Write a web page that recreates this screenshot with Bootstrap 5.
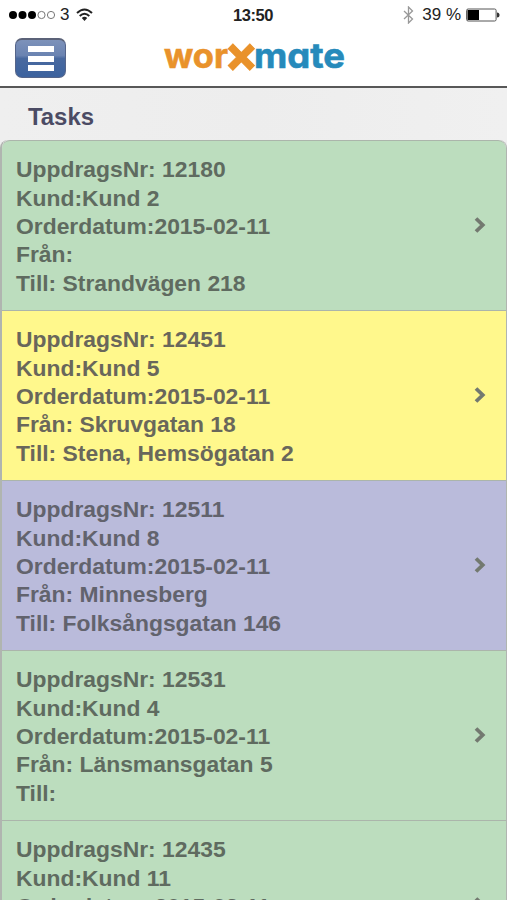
<!DOCTYPE html>
<html lang="sv">
<head>
<meta charset="utf-8">
<meta name="viewport" content="width=device-width, initial-scale=1">
<title>worXmate – Tasks</title>
<link href="https://cdn.jsdelivr.net/npm/bootstrap@5.3.0/dist/css/bootstrap.min.css" rel="stylesheet">
<style>
body{font-family:"Liberation Sans",Arial,sans-serif;height:900px;overflow:hidden;background:#efefef;color:#222}
svg{display:block;flex:none}
.status-bar{height:30px;font-size:17px;line-height:30px;padding:0 7px 0 9px;display:grid;grid-template-columns:1fr auto 1fr}
.status-bar .clock{font-size:16.5px;letter-spacing:-.4px;margin-left:-3px}
.app-header{height:58px;border-bottom:2px solid #585858;padding:0 15px;display:grid;grid-template-columns:51px 1fr 51px}
.menu-btn,.menu-btn:hover{width:51px;height:40px;margin-top:8px;border:1px solid #55658a;border-top:2px solid #5b6278;border-radius:7px;background:linear-gradient(#7d92ba,#6a83b1 42%,#49699f 50%,#3c639f);gap:3.5px}
.menu-btn span{width:26px;height:6px;background:#fff}
.logo{margin:4px 0 0}
.page-title{height:52px;padding:0 0 0 28px;font-size:23.9px;font-weight:700;line-height:57px;color:#4b4b64;background:linear-gradient(90deg,#efefef,#ededed 50%,#f0f0f0)}
.task-list{--bs-list-group-border-radius:8px;height:760px;overflow:hidden;border:solid #b0b5b0;border-width:0 1px 0 2px;border-radius:8px 8px 0 0}
.task-list .task{height:170px;flex:none;padding:14.4px 20px 0 14px;border:0;border-top:1px solid #abb5ab;font-size:22.87px;font-weight:700;line-height:28.3px}
.task svg{margin-top:61px}
.task-green{background:#bcddbe;color:#5f6b60}
.task-yellow{background:#fff88c;color:#69675b}
.task-blue{background:#babbdb;color:#62636d}
</style>
<script src="https://cdn.jsdelivr.net/npm/bootstrap@5.3.0/dist/js/bootstrap.bundle.min.js" defer></script>
</head>
<body>
<svg width="0" height="0" class="position-absolute"><symbol id="chev" viewBox="0 0 12 18"><path d="M2 2.500 L8.700 9 L2 15.500" fill="none" stroke="#737970" stroke-width="3.800"/></symbol></svg>
<div class="status-bar bg-white">
  <div class="d-flex align-items-center">
    <svg width="48" height="12" viewBox="0 0 48 12"><g fill="#000"><circle cx="4" cy="6" r="4"/><circle cx="13.500" cy="6" r="4"/><circle cx="23" cy="6" r="4"/></g><g fill="none" stroke="#777"><circle cx="32.500" cy="6" r="3.600"/><circle cx="42" cy="6" r="3.600"/></g></svg>
    <span style="margin-left:3px">3</span>
    <svg style="margin-left:7px" width="17" height="14" viewBox="0 0 17 14"><g fill="none" stroke="#222" stroke-width="2"><path d="M1 5 Q8.500 -2 16 5"/><path d="M3.700 8 Q8.500 3.500 13.300 8"/></g><path d="M5.800 10 Q8.500 7.700 11.200 10 L8.500 13Z" fill="#222"/></svg>
  </div>
  <div class="clock fw-bold">13:50</div>
  <div class="d-flex align-items-center justify-content-end">
    <svg width="11" height="18" viewBox="0 0 11 18"><path d="M1 5 L9.500 13 L5.500 17 V1 L9.500 5 L1 13" fill="none" stroke="#999" stroke-width="1.300"/></svg>
    <span style="margin:0 5px 0 8px">39 %</span>
    <svg width="34" height="14" viewBox="0 0 34 14"><rect x=".6" y="1" width="29.500" height="12" rx="1.500" fill="#fff" stroke="#555"/><path d="M1.500 2H13V12H1.500Z" fill="#000"/><path d="M31 4.500Q33.500 4.500 33.500 7T31 9.500Z" fill="#333"/></svg>
  </div>
</div>
<header class="app-header bg-white">
  <button class="menu-btn btn p-0 d-flex flex-column align-items-center justify-content-center" aria-label="Menu"><span></span><span></span><span></span></button>
  <svg class="logo mx-auto" width="190" height="50" viewBox="-3 0 190 50" font-family="Inter,sans-serif" font-weight="700" style="font-feature-settings:'cv11'">
    <text x="2" y="33.500" font-size="35" fill="#e9922b" stroke="#e9922b" stroke-width=".6" textLength="64" lengthAdjust="spacingAndGlyphs">wor</text>
    <text x="79.300" y="37.500" font-size="51" text-anchor="middle" fill="#e9922b" stroke="#e9922b" stroke-width="1">×</text>
    <text x="92" y="33.500" font-size="35" fill="#268abb" stroke="#268abb" stroke-width=".6" textLength="91" lengthAdjust="spacingAndGlyphs">mate</text>
  </svg>
</header>
<h1 class="page-title m-0">Tasks</h1>
<div class="task-list list-group">
  <a class="task task-green list-group-item d-flex justify-content-between"><div>UppdragsNr: 12180<br>Kund:Kund 2<br>Orderdatum:2015-02-11<br>Från:<br>Till: Strandvägen 218</div><svg width="12" height="18"><use href="#chev"/></svg></a>
  <a class="task task-yellow list-group-item d-flex justify-content-between"><div>UppdragsNr: 12451<br>Kund:Kund 5<br>Orderdatum:2015-02-11<br>Från: Skruvgatan 18<br>Till: Stena, Hemsögatan 2</div><svg width="12" height="18"><use href="#chev"/></svg></a>
  <a class="task task-blue list-group-item d-flex justify-content-between"><div>UppdragsNr: 12511<br>Kund:Kund 8<br>Orderdatum:2015-02-11<br>Från: Minnesberg<br>Till: Folksångsgatan 146</div><svg width="12" height="18"><use href="#chev"/></svg></a>
  <a class="task task-green list-group-item d-flex justify-content-between"><div>UppdragsNr: 12531<br>Kund:Kund 4<br>Orderdatum:2015-02-11<br>Från: Länsmansgatan 5<br>Till:</div><svg width="12" height="18"><use href="#chev"/></svg></a>
  <a class="task task-green list-group-item d-flex justify-content-between"><div>UppdragsNr: 12435<br>Kund:Kund 11<br>Orderdatum:2015-02-11</div><svg width="12" height="18"><use href="#chev"/></svg></a>
</div>
</body>
</html>
